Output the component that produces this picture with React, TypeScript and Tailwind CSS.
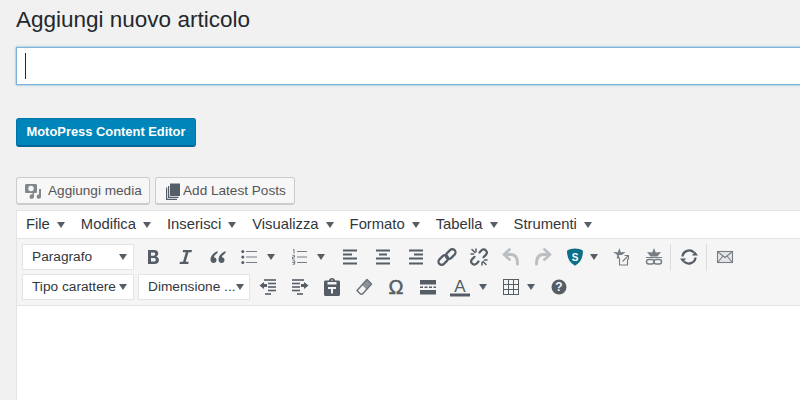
import React from "react";

const Caret = ({ className = "" }: { className?: string }) => (
  <span className={`w-0 h-0 border-x-[4px] border-x-transparent border-t-[6px] border-t-[#555d66] ${className}`} />
);

const Ico = ({ children, w = 32, color = "#555d66" }: { children: React.ReactNode; w?: number; color?: string }) => (
  <span className="flex items-center justify-center shrink-0 h-[24px]" style={{ width: w }}>
    <svg width="20" height="20" viewBox="0 0 20 20" fill="none" stroke={color} strokeWidth="2">
      {children}
    </svg>
  </span>
);

const lines = (ys: number[][]) => ys.map(([x1, x2, y], i) => <path key={i} d={`M${x1} ${y}H${x2}`} />);

const Bold = () => <path fill="#555d66" stroke="none" fillRule="evenodd" d="M5 3h6.200c2.600 0 4 1.300 4 3.500 0 1.500-.8 2.600-2.100 3 1.700.3 2.800 1.600 2.800 3.500 0 2.600-1.700 4-4.500 4H5V3zm3 2.400v3.300h2.600c1 0 1.600-.6 1.600-1.700 0-1-.6-1.600-1.600-1.600H8zm0 5.600v3.600h3c1.100 0 1.800-.7 1.800-1.800s-.7-1.800-1.800-1.800H8z" />;
const Italic = () => <path fill="#555d66" stroke="none" d="M7 3h9l-.5 2.200h-3L9.700 14.800h3L12.200 17H3.500l.5-2.200h3l2.800-9.600h-3z" />;
const Quote = () => <path fill="#555d66" stroke="none" d="M9.500 4C6 5.500 2.500 8.500 2.500 12.500 2.500 14.500 3.800 16 5.500 16S8.500 14.700 8.500 13 7.300 10.300 5.800 10.300c.3-1.500 2-3 3.700-4.300zM17.500 4C14 5.500 10.500 8.500 10.500 12.500c0 2 1.300 3.500 3 3.500s3-1.300 3-3-1.200-2.700-2.700-2.700c.3-1.500 2-3 3.700-4.300z" />;
const Bullets = () => (
  <g strokeWidth="1" stroke="#777d84">
    {lines([[6, 17, 4.500], [6, 17, 10], [6, 17, 15.500]])}
    <circle cx="2.800" cy="4.500" r="1.500" fill="#555d66" stroke="none" />
    <circle cx="2.800" cy="10" r="1.500" fill="#555d66" stroke="none" />
    <circle cx="2.800" cy="15.500" r="1.500" fill="#555d66" stroke="none" />
  </g>
);
const Numbers = () => (
  <g strokeWidth="1" stroke="#777d84">
    {lines([[7, 17, 4.500], [7, 17, 10], [7, 17, 15.500]])}
    <path d="M3 2.500h1v4M2.500 8.300h2v1.800h-2v1.900h2.200M2.500 13.800h2.200v3.400h-2.200M2.500 15.500h2" strokeWidth=".8" stroke="#555d66" />
  </g>
);
const AlignLeft = () => <g strokeWidth="2">{lines([[2, 16, 3.500], [2, 11, 7.500], [2, 16, 11.500], [2, 16, 16.500]])}</g>;
const AlignCenter = () => <g strokeWidth="2">{lines([[3, 17, 3.500], [6, 14, 7.500], [3, 17, 11.500], [3, 17, 16.500]])}</g>;
const AlignRight = () => <g strokeWidth="2">{lines([[4, 18, 3.500], [9, 18, 7.500], [4, 18, 11.500], [4, 18, 16.500]])}</g>;
const LinkIco = () => (
  <g strokeWidth="2.200">
    <rect x="0.800" y="9.800" width="11" height="6.400" rx="3.200" transform="rotate(-45 6.300 13)" />
    <rect x="8.200" y="3.800" width="11" height="6.400" rx="3.200" transform="rotate(-45 13.700 7)" />
  </g>
);
const Unlink = () => (
  <g strokeWidth="2.200" strokeLinecap="round">
    <path d="M10.500 5.500l1.800-2c1.500-1.400 3.400-1.400 4.600-.1s1.200 3.200-.1 4.500l-2.300 2.300" />
    <path d="M9.500 14.500l-1.800 2c-1.500 1.400-3.400 1.400-4.600.1s-1.200-3.200.1-4.500l2.300-2.300" />
    <path d="M3 2.500l3 3M2 7h2.500M7 2v2.500M17 17.500l-3-3M18 13h-2.500M13 18v-2.500" strokeWidth="1.500" />
  </g>
);
const Undo = () => (
  <g stroke="#bcbfc2">
    <path d="M6 7.500h4c4 0 6.500 3 6.500 9.500" strokeWidth="3" strokeLinecap="round" />
    <path d="M8.500 2.500L3 7.500l5.500 5" strokeWidth="2.800" strokeLinecap="round" strokeLinejoin="round" />
  </g>
);
const Redo = () => (
  <g stroke="#bcbfc2">
    <path d="M14 7.500h-4C6 7.500 3.500 10.500 3.500 17" strokeWidth="3" strokeLinecap="round" />
    <path d="M11.500 2.500L17 7.500l-5.500 5" strokeWidth="2.800" strokeLinecap="round" strokeLinejoin="round" />
  </g>
);
const Shield = () => (
  <>
    <path fill="#0e7088" stroke="none" d="M10 1.500c3 0 6 .8 8 2.200 0 7-2.500 12-8 15-5.500-3-8-8-8-15 2-1.400 5-2.200 8-2.200z" />
    <text x="10" y="13.500" textAnchor="middle" fontSize="10" fontWeight="700" fill="#fff" stroke="none" fontFamily="Liberation Sans, sans-serif">S</text>
  </>
);
const StarEdit = () => (
  <g strokeWidth="1.100" stroke="#777d84">
    <path fill="#777d84" stroke="none" d="M8.500 1l1.300 4.200 4.700-.2-3.500 3H8v3.500H5.700l.6-3.500L2 5l4.800.2z" />
    <path d="M8.500 10.500v7.500h8v-6" />
    <path d="M11.500 14.500l5.500-5.500M13.500 8.500H17.500v4" />
  </g>
);
const StarLink = () => (
  <g stroke="#777d84">
    <path fill="#777d84" stroke="none" d="M10 1l1.800 4.500 5.200-.5-3.500 4.500h-7L3 5l5.200.5z" />
    <path d="M2 10.500h16" strokeWidth="1" />
    <rect x="2.500" y="12.500" width="7.500" height="4.500" rx="2.200" strokeWidth="1.500" />
    <rect x="10" y="12.500" width="7.500" height="4.500" rx="2.200" strokeWidth="1.500" />
  </g>
);
const Refresh = () => (
  <g strokeWidth="2.300">
    <path d="M3.500 9.500A6.700 6.700 0 0 1 15 5.500" />
    <path d="M16.500 10.500A6.700 6.700 0 0 1 5 14.500" />
    <path fill="#555d66" stroke="none" d="M13 8.500h6l-3-4zM7 11.500H1l3 4z" />
  </g>
);
const Mail = () => (
  <g strokeWidth="1.100" stroke="#777d84">
    <rect x="2.500" y="4.500" width="15" height="11" fill="#e4e5e6" />
    <path d="M3 5l7 5.500L17 5M3 15l5-6M17 15l-5-6" />
  </g>
);
const Outdent = () => (
  <g strokeWidth="1.600">
    {lines([[6, 18, 3], [10, 18, 6.500], [10, 18, 10], [10, 18, 13.500], [7, 13, 17]])}
    <path fill="#555d66" stroke="none" d="M1.500 8.500L6 5v2h3v3H6v2z" />
  </g>
);
const Indent = () => (
  <g strokeWidth="1.600">
    {lines([[2, 14, 3], [2, 10, 6.500], [2, 10, 10], [2, 10, 13.500], [7, 13, 17]])}
    <path fill="#555d66" stroke="none" d="M18.500 8.500L14 5v2h-3v3h3v2z" />
  </g>
);
const Paste = () => (
  <path fill="#555d66" stroke="none" fillRule="evenodd" d="M7 3.500C7 2.200 8.300 1 10 1s3 1.200 3 2.500h3.500c.8 0 1.500.7 1.500 1.500v12.500c0 .8-.7 1.500-1.500 1.500h-13c-.8 0-1.500-.7-1.500-1.500V5c0-.8.7-1.500 1.500-1.500H7zM5.500 5v2.500h9V5zM6 10v2h3v4.500h2V12h3v-2zM9 3.500h2a1 1 0 0 0-2 0z" />
);
const Eraser = () => (
  <g stroke="#6d737a">
    <path fill="#8f949a" stroke="none" d="M13 2.500l4.500 4.500-5 5.500L8 8z" />
    <path d="M13 2.500l4.500 4.500-9 10H6.500L3 13.500z" strokeWidth="1.500" strokeLinejoin="round" />
  </g>
);
const Omega = () => (
  <text x="10" y="17" textAnchor="middle" fontSize="20" fill="#555d66" stroke="#555d66" strokeWidth=".5" fontFamily="Liberation Sans, sans-serif">Ω</text>
);
const Hr = () => (
  <g>
    <path fill="#555d66" stroke="none" d="M2 3h16v4.500H2zM2 13h16v4.500H2z" />
    <path strokeWidth="1.500" strokeDasharray="3 1.500" d="M2 10.200h16" />
  </g>
);
const TextColor = () => (
  <g>
    <text x="10" y="15" textAnchor="middle" fontSize="17" fill="#555d66" stroke="none" fontFamily="Liberation Sans, sans-serif">A</text>
    <path fill="#555d66" stroke="none" d="M0 16.500h20v3H0z" />
  </g>
);
const Table = () => (
  <g strokeWidth="1">
    <rect x="2.500" y="2.500" width="15" height="15" />
    <path d="M7.500 2.500v15M12.500 2.500v15M2.500 7.500h15M2.500 12.500h15" />
  </g>
);
const Help = () => (
  <>
    <circle cx="10" cy="10" r="7.500" fill="#555d66" stroke="none" />
    <text x="10" y="14.300" textAnchor="middle" fontSize="12" fontWeight="700" fill="#f5f5f5" stroke="none" fontFamily="Liberation Sans, sans-serif">?</text>
  </>
);

const Sep = () => <span className="w-px h-[27px] bg-[#dcdcde] shrink-0" />;

const IcoCaret = ({ children, w, gap = "ml-[7px]" }: { children: React.ReactNode; w: number; gap?: string }) => (
  <span className="flex items-center shrink-0 h-[24px] pl-[6px]" style={{ width: w }}>
    <svg width="20" height="20" viewBox="0 0 20 20" fill="none" stroke="#555d66" strokeWidth="2" className="shrink-0">
      {children}
    </svg>
    <Caret className={gap} />
  </span>
);

const Select = ({ label }: { label: string }) => (
  <div className="w-[112px] h-[26px] bg-white border border-[#e2e4e7] flex items-center justify-between pl-[9px] pr-[6px] text-[13.700px] text-[#32373c] shrink-0 whitespace-nowrap">
    <span>{label}</span>
    <Caret />
  </div>
);

const menus = ["File", "Modifica", "Inserisci", "Visualizza", "Formato", "Tabella", "Strumenti"];

export default function App() {
  return (
    <div className="w-[800px] h-[400px] overflow-hidden bg-[#f1f1f1] pl-[16px] font-['Liberation_Sans',sans-serif] text-[#23282d]">
      <h1 className="text-[22.500px] leading-[24px] pt-[8px] h-[47px] font-normal text-[#23282d]">Aggiungi nuovo articolo</h1>

      <div className="w-[800px] h-[38px] bg-white border border-[#7bb3dd] shadow-[0_0_2px_rgba(30,140,190,0.7)] flex items-center pl-[8px]">
        <span className="w-px h-[26px] bg-[#23282d]" />
      </div>

      <button className="block mt-[33px] w-[180px] h-[29px] rounded-[3px] bg-[#0085ba] border border-[#0073aa] border-b-[2px] border-b-[#006799] text-white text-[12.900px] font-bold text-center">
        MotoPress Content Editor
      </button>

      <div className="flex gap-[5px] mt-[30px]">
        <button className="w-[134px] h-[28px] rounded-[3px] bg-[#f7f7f7] border border-[#cccccc] border-b-[2px] flex items-center pl-[7px] pt-[1px] gap-[6px] text-[13.600px] text-[#555555]">
          <svg width="18" height="18" viewBox="0 0 18 18" className="shrink-0">
            <path fill="#82878c" fillRule="evenodd" d="M2.500 2h9c1 0 1.500.6 1.500 1.500v6c0 1-.5 1.500-1.500 1.500H10v3.500a2.200 2.200 0 1 1-1.500-2V11h-6C1.600 11 1 10.500 1 9.500v-6C1 2.600 1.600 2 2.500 2zM7 3.800a2.700 2.700 0 1 0 0 5.400 2.700 2.700 0 0 0 0-5.400z" />
            <path fill="#82878c" d="M15 7h2v7.500a2.200 2.200 0 1 1-2-2.100z" />
          </svg>
          <span>Aggiungi media</span>
        </button>
        <button className="w-[140px] h-[28px] rounded-[3px] bg-[#f7f7f7] border border-[#cccccc] border-b-[2px] flex items-center pl-[10px] pt-[1px] gap-[3px] text-[13.600px] text-[#555555]">
          <svg width="14" height="18" viewBox="0 0 14 18" className="shrink-0">
            <path fill="#555d66" d="M4 1.500h10v12.500H4z" />
            <path fill="none" stroke="#555d66" strokeWidth="1.200" d="M2.600 4v11.400H12.500M.6 5.500V17.400H11" />
          </svg>
          <span>Add Latest Posts</span>
        </button>
      </div>

      <div className="mt-[5px] h-[200px] border-t border-l border-[#e2e4e7] bg-white">
        <div className="h-[27px] bg-white flex items-center pl-[9px] gap-[16px] text-[14.800px] text-[#32373c]">
          {menus.map((m) => (
            <span key={m} className="flex items-center gap-[7px]">
              {m}
              <Caret />
            </span>
          ))}
        </div>

        <div className="h-[68px] bg-[#f5f5f5] border-t border-b border-[#e2e4e7] pl-[5px] pt-[5px] flex flex-col gap-[4px]">
          <div className="flex items-center h-[26px]">
            <Select label="Paragrafo" />
            <span className="w-[1px]" />
            <Ico w={35}><Bold /></Ico>
            <Ico><Italic /></Ico>
            <Ico><Quote /></Ico>
            <IcoCaret w={50}><Bullets /></IcoCaret>
            <IcoCaret w={51}><Numbers /></IcoCaret>
            <Ico><AlignLeft /></Ico>
            <Ico><AlignCenter /></Ico>
            <Ico><AlignRight /></Ico>
            <Ico><LinkIco /></Ico>
            <Ico><Unlink /></Ico>
            <Ico><Undo /></Ico>
            <Ico><Redo /></Ico>
            <IcoCaret w={46} gap="ml-[5px]"><Shield /></IcoCaret>
            <Ico><StarEdit /></Ico>
            <Ico w={33}><StarLink /></Ico>
            <Sep />
            <Ico w={35}><Refresh /></Ico>
            <Sep />
            <Ico w={35}><Mail /></Ico>
          </div>
          <div className="flex items-center h-[26px] gap-[4px]">
            <Select label="Tipo carattere" />
            <Select label="Dimensione ..." />
            <div className="flex items-center -ml-[2px]">
              <Ico><Outdent /></Ico>
              <Ico><Indent /></Ico>
              <Ico><Paste /></Ico>
              <Ico><Eraser /></Ico>
              <Ico><Omega /></Ico>
              <Ico><Hr /></Ico>
              <IcoCaret w={51} gap="ml-[9px]"><TextColor /></IcoCaret>
              <IcoCaret w={48} gap="ml-[6px]"><Table /></IcoCaret>
              <Ico><Help /></Ico>
            </div>
          </div>
        </div>
      </div>
    </div>
  );
}
